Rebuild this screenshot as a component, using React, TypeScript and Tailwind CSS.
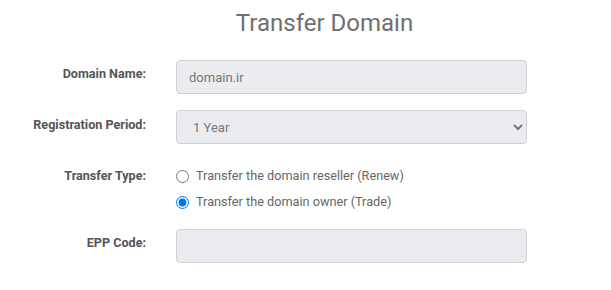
export default function App() {
  return (
    <div className="min-h-screen bg-white font-['Roboto',sans-serif]">
      <h2 className="pt-[9px] pl-[38px] text-center text-[24px] leading-[28px] text-[#6f6f6f]">
        Transfer Domain
      </h2>

      <form className="mt-[23px] grid grid-cols-[146px_351px] gap-x-[30px] gap-y-4">
        <label className="pt-[4px] text-right text-[12.6px] font-bold leading-5 text-[#555]">
          Domain Name:
        </label>
        <input
          defaultValue="domain.ir"
          className="h-[34px] rounded-[4px] border border-[#cfd1d6] bg-[#ebecf0] px-3 text-[13px] text-[#777] outline-none"
        />

        <label className="pt-[5px] text-right text-[12.6px] font-bold leading-5 text-[#555]">
          Registration Period:
        </label>
        <select className="h-[34px] rounded-[4px] border border-[#cfd1d6] bg-[#ebecf0] px-3 text-[13px] text-[#777] outline-none">
          <option>1 Year</option>
        </select>

        <label className="pt-[6px] text-right text-[12.6px] font-bold leading-5 text-[#555]">
          Transfer Type:
        </label>
        <div className="flex flex-col gap-[6px] pt-[6px] pb-[1px]">
          <label className="flex items-center gap-[7px] text-[12.7px] leading-5 text-[#666]">
            <input type="radio" name="type" className="m-0 size-[13px]" />
            Transfer the domain reseller (Renew)
          </label>
          <label className="flex items-center gap-[7px] text-[12.7px] leading-5 text-[#666]">
            <input type="radio" name="type" defaultChecked className="m-0 size-[13px]" />
            Transfer the domain owner (Trade)
          </label>
        </div>

        <label className="pt-[4px] text-right text-[12.6px] font-bold leading-5 text-[#555]">
          EPP Code:
        </label>
        <input className="h-[34px] rounded-[4px] border border-[#cfd1d6] bg-[#ebecf0] px-3 text-[13px] text-[#777] outline-none" />
      </form>
    </div>
  );
}
